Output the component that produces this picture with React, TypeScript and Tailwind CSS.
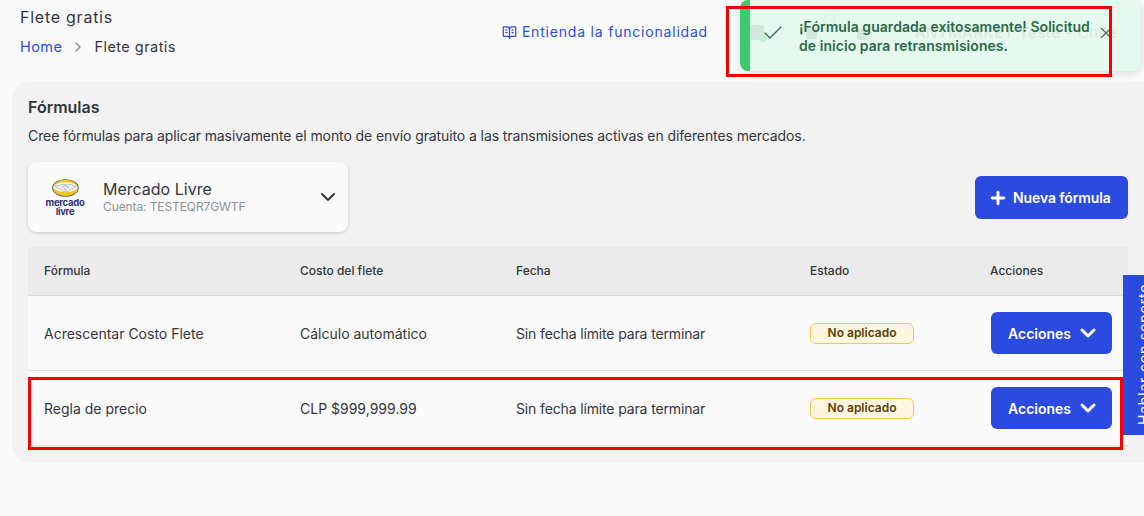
import { BookOpenText, Check, ChevronDown, ChevronRight, Plus, X } from "lucide-react";
import React from "react";

const MercadoLogo = () => {
  return (
    <div className="flex w-[42px] flex-col items-center">
      <svg width="27" height="18" viewBox="0 0 27 18">
        <ellipse cx="13.5" cy="9" rx="13.2" ry="8.8" fill="#2d3277" />
        <ellipse cx="13.5" cy="9" rx="12.6" ry="8.2" fill="#f5c518" />
        <ellipse cx="13.5" cy="8.2" rx="11.6" ry="5" fill="#fff" />
        <path d="M3 7.5 L8 6 L12 5 L15 6 L19 5.5 L24 7.5 L19.5 10 L15.5 13 L12 12.5 L8 10Z" fill="#f1f1f4" stroke="#8f92b8" strokeWidth="0.6" />
        <path d="M10 8 L13 6.5 L17 9 M12 9.5 L15 11.5" fill="none" stroke="#8f92b8" strokeWidth="0.7" />
      </svg>
      <span className="mt-[2px] text-[9.5px] leading-[8px] font-bold tracking-[-0.3px] text-[#2d3277]">mercado</span>
      <span className="text-[9.5px] leading-[9px] font-bold tracking-[-0.3px] text-[#2d3277]">livre</span>
    </div>
  );
};

const Row = ({ name, cost }: { name: string; cost: string }) => {
  return (
    <div className="grid h-[75px] grid-cols-[256px_216px_294px_181px_153px] items-center border-b border-[#dcdcdc] bg-[#fafafa] text-[14px] text-[#33363b]">
      <div className="px-4">{name}</div>
      <div className="px-4">{cost}</div>
      <div className="px-4 tracking-[-0.14px]">Sin fecha límite para terminar</div>
      <div className="px-4">
        <span className="flex h-[21px] w-[104px] items-center justify-center rounded-[6px] border border-[#fbc44d] bg-[#fff6e0] text-[12px] font-semibold text-[#573e09]">
          No aplicado
        </span>
      </div>
      <div className="pl-4">
        <button className="flex h-[42px] w-[121px] items-center gap-[5px] rounded-[6px] bg-[#2b4be0] pl-[17px] text-[14px] font-semibold text-white">
          Acciones
          <ChevronDown size={24} strokeWidth={3} />
        </button>
      </div>
    </div>
  );
};

const App = () => {
  return (
    <div className="relative h-[516px] w-[1144px] overflow-hidden bg-[#fafafa] font-['Inter',sans-serif]">
      <div className="flex h-[82px] items-start justify-between pr-[436px] pl-5">
        <div>
          <div className="mt-[7px] text-[16px] leading-5 tracking-[0.75px] text-[#33363b]">Flete gratis</div>
          <div className="mt-[10px] flex items-center text-[14.5px] leading-5 tracking-[0.45px]">
            <span className="text-[#2b4be0]">Home</span>
            <ChevronRight size={16} className="mx-[8px] text-[#8a8a8a]" />
            <span className="text-[#33363b]">Flete gratis</span>
          </div>
        </div>
        <div className="mt-[22px] flex items-center gap-[5px] text-[14px] leading-5 tracking-[0.8px] text-[#2b4be0]">
          <BookOpenText size={15} />
          Entienda la funcionalidad
        </div>
      </div>

      <div className="ml-3 h-[380px] rounded-l-2xl bg-[#f2f2f2] pt-[15px] pl-4">
        <div className="text-[16px] leading-[20px] font-semibold text-[#33363b]">Fórmulas</div>
        <div className="mt-[9px] text-[14px] leading-5 tracking-[-0.1px] text-[#33363b]">
          Cree fórmulas para aplicar masivamente el monto de envío gratuito a las transmisiones activas en diferentes mercados.
        </div>
        <div className="mt-4 flex h-[85px] w-[1100px] items-start justify-between">
          <div className="flex h-[70px] w-[320px] items-center rounded-lg bg-[#fafafa] pr-2 pl-4 shadow-[0_1px_3px_rgba(0,0,0,0.18)]">
            <MercadoLogo />
            <div className="ml-[17px] flex-1">
              <div className="text-[16px] leading-5 text-[#33363b]">Mercado Livre</div>
              <div className="text-[12px] leading-4 tracking-[-0.1px] text-[#8f9196]">Cuenta: TESTEQR7GWTF</div>
            </div>
            <ChevronDown size={24} strokeWidth={2} className="text-[#33363b]" />
          </div>
          <button className="mt-[14px] flex h-[43px] w-[153px] items-center gap-[5px] rounded-[6px] bg-[#2b4be0] pl-[13px] text-[14px] font-semibold tracking-[-0.1px] text-white">
            <Plus size={20} strokeWidth={3.5} />
            Nueva fórmula
          </button>
        </div>
        <div className="w-[1100px]">
          <div className="grid h-[49px] grid-cols-[256px_216px_294px_181px_153px] items-center border-b border-[#dcdcdc] bg-[#ebebeb] text-[12px] font-medium text-[#33363b]">
            <div className="px-4">Fórmula</div>
            <div className="px-4">Costo del flete</div>
            <div className="px-4">Fecha</div>
            <div className="px-4">Estado</div>
            <div className="pl-[15px]">Acciones</div>
          </div>
          <Row name="Acrescentar Costo Flete" cost="Cálculo automático" />
          <Row name="Regla de precio" cost="CLP $999,999.99" />
        </div>
      </div>

      <div className="absolute top-[275px] right-0 flex h-[160px] w-[21px] items-start overflow-hidden bg-[#2b4be0]">
        <span className="ml-[11px] h-[160px] rotate-180 pt-[10px] text-[14px] leading-5 tracking-[0.8px] whitespace-nowrap text-white [writing-mode:vertical-rl]">
          Hablar con soporte
        </span>
      </div>

      <div className="absolute top-0 left-[740px] flex h-[71px] w-[401px] items-center overflow-hidden rounded-lg bg-[#e6f9ee] shadow-[0_2px_8px_rgba(0,0,0,0.12)]">
        <div className="h-full w-[10px] shrink-0 bg-[#3ecb70]" />
        {/* page header showing faintly through the toast */}
        <div className="absolute top-[25px] left-[10px] h-[15px] w-[14px] rounded-[2px] bg-[#d3e8db]" />
        <div className="absolute top-[34px] left-[19px] size-2 rounded-full bg-[#c4f0d4]" />
        <div className="absolute top-[14px] left-[83px] size-3 rounded-full border border-[#d8eedf]" />
        <div className="absolute top-[28px] left-[66px] h-[11px] w-[11px] rounded-[2px] bg-[#d3e8db]" />
        <div className="absolute top-[29px] left-[117px] h-[11px] w-[11px] rounded-[2px] bg-[#d3e8db]" />
        <div className="absolute top-[23px] left-[175px] text-[15px] leading-5 tracking-[0.6px] whitespace-nowrap text-[#d5e8dc]">
          ANTMARKET Teste - Chile
        </div>
        <Check size={24} strokeWidth={1.2} className="relative -mt-[5px] ml-[11px] shrink-0 text-[#2d6a4a]" />
        <div className="relative ml-[14px] w-[300px] text-[14px] leading-[19px] font-semibold tracking-[0.05px] text-[#2d6a4a]">
          ¡Fórmula guardada exitosamente! Solicitud de inicio para retransmisiones.
        </div>
        <X size={18} strokeWidth={1.5} className="relative -mt-[6px] -ml-[2px] shrink-0 text-[#4b6a5a]" />
      </div>

      <div className="pointer-events-none absolute top-[6px] left-[726px] h-[71px] w-[386px] border-[3px] border-[#f50000]" />
      <div className="pointer-events-none absolute top-[377px] left-[28px] h-[73px] w-[1095px] border-[3px] border-[#f50000]" />
    </div>
  );
};

export default App;
